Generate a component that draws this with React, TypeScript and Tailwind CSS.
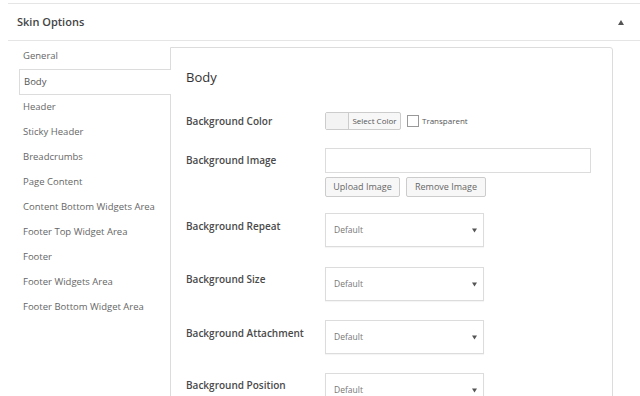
const navItems = [
  "General",
  "Body",
  "Header",
  "Sticky Header",
  "Breadcrumbs",
  "Page Content",
  "Content Bottom Widgets Area",
  "Footer Top Widget Area",
  "Footer",
  "Footer Widgets Area",
  "Footer Bottom Widget Area",
];

const font = { fontFamily: "'Open Sans', 'Liberation Sans', sans-serif" };

function SelectBox() {
  return (
    <div className="w-[159px] h-[34px] border border-[#dcdcdc] bg-white flex items-center justify-between pl-[8px] pr-[6px] shadow-[0_1px_1px_rgba(0,0,0,0.04)]">
      <span className="text-[8.5px] text-[#777]">Default</span>
      <svg width="5" height="5" viewBox="0 0 6 5">
        <path d="M0 0 L6 0 L3 5 Z" fill="#555" />
      </svg>
    </div>
  );
}

function Label({ text, pt }: { text: string; pt: string }) {
  return (
    <div className={`w-[139px] shrink-0 text-[10px] font-semibold text-[#4a4a4a] leading-[16px] ${pt}`}>
      {text}
    </div>
  );
}

export default function App() {
  return (
    <div className="w-[640px] h-[396px] overflow-hidden bg-white pt-[3px] pl-[8px]" style={font}>
      <div className="h-[38px] border-t border-b border-[#e5e5e5] flex items-center justify-between pl-[9px] pr-[16px]">
        <span className="text-[11px] font-semibold text-[#444]">Skin Options</span>
        <svg width="6" height="5" viewBox="0 0 6 5">
          <path d="M3 0 L6 5 L0 5 Z" fill="#555" />
        </svg>
      </div>

      <div className="flex pt-[3px]">
        <div className="w-[162px] shrink-0 pl-[11px]">
          {navItems.map((item) =>
            item === "Body" ? (
              <div
                key={item}
                className="relative z-10 -mr-px h-[26px] border border-r-0 border-[#dcdcdc] bg-white flex items-center pl-[4px] text-[9.5px] text-[#555]"
              >
                {item}
              </div>
            ) : (
              <div key={item} className="h-[25px] flex items-center pl-[4px] text-[9.5px] text-[#666]">
                {item}
              </div>
            )
          )}
        </div>

        <div className="mt-[3px] w-[443px] h-[400px] border border-[#dcdcdc] rounded-tr-[3px] bg-white pl-[15px] pt-[19px]">
          <div className="text-[13px] text-[#333] leading-[20px]">Body</div>

          <div className="flex mt-[25px]">
            <Label text="Background Color" pt="pt-[1px]" />
            <div className="flex items-center">
              <div className="h-[18px] w-[76px] border border-[#ccc] rounded-[2px] bg-[#f7f7f7] flex">
                <div className="w-[23px] border-r border-[#ccc] bg-[#f3f3f3]" />
                <div className="flex-1 flex items-center justify-center text-[8px] text-[#555]">Select Color</div>
              </div>
              <div className="ml-[6px] w-[12px] h-[12px] border border-[#999] bg-white" />
              <span className="ml-[3px] text-[8px] text-[#555]">Transparent</span>
            </div>
          </div>

          <div className="flex mt-[18px]">
            <Label text="Background Image" pt="pt-[4px]" />
            <div>
              <div className="w-[266px] h-[25px] border border-[#dcdcdc] bg-white" />
              <div className="flex gap-[6px] mt-[4px]">
                <div className="h-[20px] w-[75px] border border-[#ccc] rounded-[2px] bg-[#f7f7f7] flex items-center justify-center text-[9px] text-[#666]">
                  Upload Image
                </div>
                <div className="h-[20px] w-[80px] border border-[#ccc] rounded-[2px] bg-[#f7f7f7] flex items-center justify-center text-[9px] text-[#666]">
                  Remove Image
                </div>
              </div>
            </div>
          </div>

          <div className="flex mt-[16px]">
            <Label text="Background Repeat" pt="pt-[5px]" />
            <SelectBox />
          </div>

          <div className="flex mt-[20px]">
            <Label text="Background Size" pt="pt-[4px]" />
            <SelectBox />
          </div>

          <div className="flex mt-[19px]">
            <Label text="Background Attachment" pt="pt-[5px]" />
            <SelectBox />
          </div>

          <div className="flex mt-[19px]">
            <Label text="Background Position" pt="pt-[4px]" />
            <SelectBox />
          </div>
        </div>
      </div>
    </div>
  );
}
